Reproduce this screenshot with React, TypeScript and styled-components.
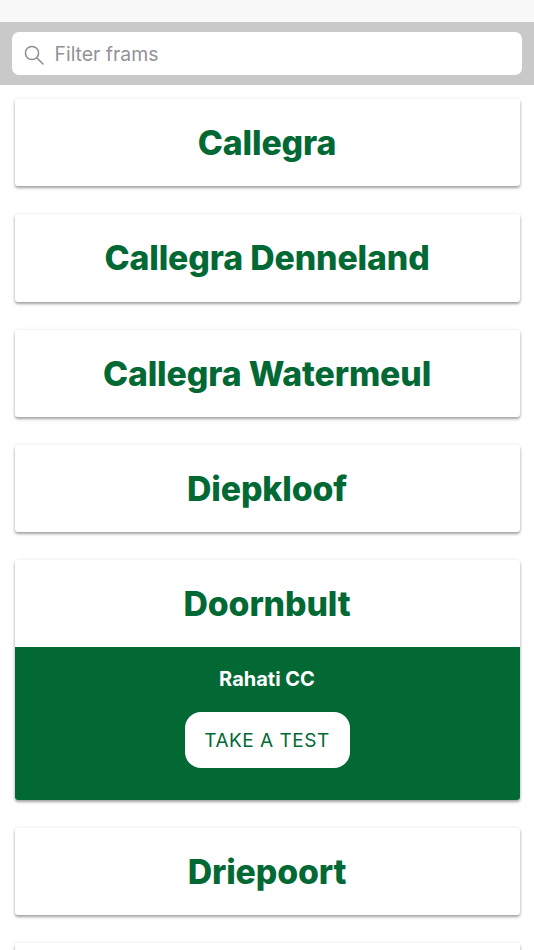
import React from "react";
import styled, { createGlobalStyle } from "styled-components";

const GlobalStyle = createGlobalStyle`
  html, body {
    margin: 0;
    padding: 0;
    background: #ffffff;
    overflow: hidden;
  }
  * {
    box-sizing: border-box;
  }
`;

const Screen = styled.div`
  width: 534px;
  height: 950px;
  overflow: hidden;
  font-family: Inter, "Liberation Sans", sans-serif;
`;

const StatusBar = styled.div`
  height: 22px;
  background: #f8f8f8;
`;

const SearchBar = styled.div`
  height: 63px;
  padding: 10px 12px 10px 11.5px;
  background: #c9c9c9;
`;

const SearchField = styled.div`
  height: 43px;
  display: flex;
  align-items: center;
  gap: 11px;
  padding-left: 12px;
  background: #ffffff;
  border-radius: 7px;
`;

const IconSvg = styled.svg`
  margin-top: 2px;
`;

const Placeholder = styled.span`
  font-size: 19.4px;
  color: #929296;
`;

const List = styled.div`
  display: flex;
  flex-direction: column;
  gap: 28px;
  padding: 14px 14.5px 0;
`;

const Card = styled.div`
  background: #ffffff;
  border-radius: 3px;
  overflow: hidden;
  box-shadow: 0 2px 3px rgba(0, 0, 0, 0.35), 0 0 4px rgba(0, 0, 0, 0.08);
`;

const CardTitle = styled.div`
  height: 87.25px;
  display: flex;
  align-items: center;
  justify-content: center;
  font-size: 33.8px;
  font-weight: 800;
  letter-spacing: -0.12px;
  color: #026935;
`;

const CardBody = styled.div`
  height: 152.25px;
  display: flex;
  flex-direction: column;
  align-items: center;
  padding-top: 20px;
  background: #026935;
`;

const Club = styled.div`
  height: 24px;
  line-height: 24px;
  font-size: 20px;
  font-weight: 700;
  color: #ffffff;
`;

const TestButton = styled.button`
  width: 165px;
  height: 56px;
  margin-top: 20.5px;
  padding: 1px 0 0;
  border: none;
  border-radius: 16px;
  background: #ffffff;
  font-family: inherit;
  font-size: 19px;
  letter-spacing: 0.5px;
  color: #026935;
`;

const frams = ["Callegra", "Callegra Denneland", "Callegra Watermeul", "Diepkloof", "Doornbult", "Driepoort", ""];

function SearchIcon() {
  return (
    <IconSvg width="20" height="20" viewBox="0 0 20 20" fill="none" stroke="#8e8e93" strokeWidth="1.5" strokeLinecap="round">
      <circle cx="8" cy="8" r="6.6" />
      <path d="M13 13l6 6" />
    </IconSvg>
  );
}

export default function App() {
  return (
    <Screen>
      <GlobalStyle />
      <StatusBar />
      <SearchBar>
        <SearchField>
          <SearchIcon />
          <Placeholder>Filter frams</Placeholder>
        </SearchField>
      </SearchBar>
      <List>
        {frams.map((name, i) => (
          <Card key={i}>
            <CardTitle>{name}</CardTitle>
            {name === "Doornbult" && (
              <CardBody>
                <Club>Rahati CC</Club>
                <TestButton>TAKE A TEST</TestButton>
              </CardBody>
            )}
          </Card>
        ))}
      </List>
    </Screen>
  );
}
